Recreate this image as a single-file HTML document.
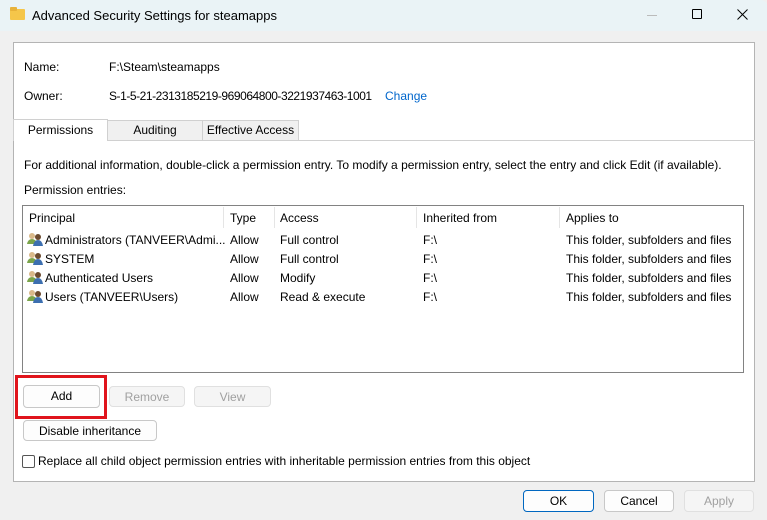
<!DOCTYPE html>
<html><head><style>
*{box-sizing:border-box;margin:0;padding:0}
body{width:767px;height:520px;background:#f0f0f0;font-family:"Liberation Sans",sans-serif;font-size:12px;color:#000;position:relative;overflow:hidden}
.a{position:absolute;white-space:nowrap}
.btn{position:absolute;border:1px solid #c8c8c8;border-radius:4px;background:#fdfdfd;text-align:center;line-height:20px;font-size:12px}
.dis{color:#a0a0a0;background:#f5f5f5;border-color:#e0e0e0}
</style></head><body>
<div class="a" style="left:0;top:0;width:767px;height:31px;background:#eaf3f6;border-top-right-radius:6px"></div>
<div class="a" style="left:10px;top:9px;width:15px;height:11px;background:#f5c64a;border-radius:1px"></div>
<div class="a" style="left:10px;top:7px;width:7px;height:4px;background:#e8b23a;border-radius:1px"></div>
<div class="a" style="left:32px;top:8px;font-size:13px">Advanced Security Settings for steamapps</div>
<div class="a" style="left:647px;top:15px;width:10px;height:1px;background:#bbb"></div>
<div class="a" style="left:692px;top:9px;width:10px;height:10px;border:1px solid #000;border-radius:1px"></div>
<svg class="a" style="left:737px;top:9px" width="11" height="11"><path d="M0.5 0.5L10.5 10.5M10.5 0.5L0.5 10.5" stroke="#000" stroke-width="1"/></svg>
<div class="a" style="left:13px;top:42px;width:742px;height:440px;background:#fff;border:1px solid #b4b4b4"></div>
<div class="a" style="left:24px;top:60px">Name:</div>
<div class="a" style="left:109px;top:60px">F:\Steam\steamapps</div>
<div class="a" style="left:24px;top:89px">Owner:</div>
<div class="a" style="left:109px;top:89px;letter-spacing:-0.45px">S-1-5-21-2313185219-969064800-3221937463-1001</div>
<div class="a" style="left:385px;top:89px;color:#0066cc">Change</div>
<div class="a" style="left:13px;top:140px;width:742px;height:1px;background:#d0d0d0"></div>
<div class="a" style="left:13px;top:119px;width:95px;height:22px;background:#fff;border:1px solid #d0d0d0;border-bottom:none;text-align:center;line-height:20px">Permissions</div>
<div class="a" style="left:107px;top:120px;width:96px;height:20px;background:#f0f0f0;border:1px solid #d0d0d0;border-bottom:none;text-align:center;line-height:19px">Auditing</div>
<div class="a" style="left:202px;top:120px;width:97px;height:20px;background:#f0f0f0;border:1px solid #d0d0d0;border-bottom:none;text-align:center;line-height:19px">Effective Access</div>
<div class="a" style="left:24px;top:158px">For additional information, double-click a permission entry. To modify a permission entry, select the entry and click Edit (if available).</div>
<div class="a" style="left:24px;top:183px">Permission entries:</div>
<div class="a" style="left:22px;top:205px;width:722px;height:168px;border:1px solid #828282;background:#fff"></div>
<div class="a" style="left:223px;top:207px;width:1px;height:21px;background:#e5e5e5"></div>
<div class="a" style="left:274px;top:207px;width:1px;height:21px;background:#e5e5e5"></div>
<div class="a" style="left:416px;top:207px;width:1px;height:21px;background:#e5e5e5"></div>
<div class="a" style="left:559px;top:207px;width:1px;height:21px;background:#e5e5e5"></div>
<div class="a" style="left:29px;top:211px">Principal</div>
<div class="a" style="left:230px;top:211px">Type</div>
<div class="a" style="left:280px;top:211px">Access</div>
<div class="a" style="left:423px;top:211px">Inherited from</div>
<div class="a" style="left:566px;top:211px">Applies to</div>
<div class="a" style="left:45px;top:233px">Administrators (TANVEER\Admi...</div>
<div class="a" style="left:45px;top:252px">SYSTEM</div>
<div class="a" style="left:45px;top:271px">Authenticated Users</div>
<div class="a" style="left:45px;top:290px">Users (TANVEER\Users)</div>
<div class="a" style="left:230px;top:233px">Allow</div><div class="a" style="left:230px;top:252px">Allow</div><div class="a" style="left:230px;top:271px">Allow</div><div class="a" style="left:230px;top:290px">Allow</div>
<div class="a" style="left:280px;top:233px">Full control</div><div class="a" style="left:280px;top:252px">Full control</div><div class="a" style="left:280px;top:271px">Modify</div><div class="a" style="left:280px;top:290px">Read &amp; execute</div>
<div class="a" style="left:423px;top:233px">F:\</div><div class="a" style="left:423px;top:252px">F:\</div><div class="a" style="left:423px;top:271px">F:\</div><div class="a" style="left:423px;top:290px">F:\</div>
<div class="a" style="left:566px;top:233px">This folder, subfolders and files</div><div class="a" style="left:566px;top:252px">This folder, subfolders and files</div><div class="a" style="left:566px;top:271px">This folder, subfolders and files</div><div class="a" style="left:566px;top:290px">This folder, subfolders and files</div>
<svg class="a" style="left:27px;top:232px" width="17" height="90">
<g id="u"><circle cx="5" cy="4" r="3" fill="#d9b98a"/><path d="M0 12Q1 7 5 7Q9 7 10 12Z" fill="#7aa44a"/><circle cx="11" cy="5" r="3" fill="#6b4a2e"/><path d="M6 14Q7 8 11 8Q15 8 16 14Z" fill="#3c6fb0"/></g>
<use href="#u" y="19"/><use href="#u" y="38"/><use href="#u" y="57"/>
</svg>
<div class="a" style="left:15px;top:375px;width:92px;height:44px;border:3px solid #e0141c"></div>
<div class="btn" style="left:23px;top:385px;width:77px;height:23px">Add</div>
<div class="btn dis" style="left:109px;top:386px;width:76px;height:21px">Remove</div>
<div class="btn dis" style="left:194px;top:386px;width:77px;height:21px">View</div>
<div class="btn" style="left:23px;top:420px;width:134px;height:21px">Disable inheritance</div>
<div class="a" style="left:22px;top:455px;width:13px;height:13px;border:1px solid #555;border-radius:2px;background:#fff"></div>
<div class="a" style="left:38px;top:454px">Replace all child object permission entries with inheritable permission entries from this object</div>
<div class="btn" style="left:523px;top:490px;width:71px;height:22px;border:1px solid #0067c0">OK</div>
<div class="btn" style="left:604px;top:490px;width:70px;height:22px">Cancel</div>
<div class="btn dis" style="left:684px;top:490px;width:70px;height:22px">Apply</div>
</body></html>
